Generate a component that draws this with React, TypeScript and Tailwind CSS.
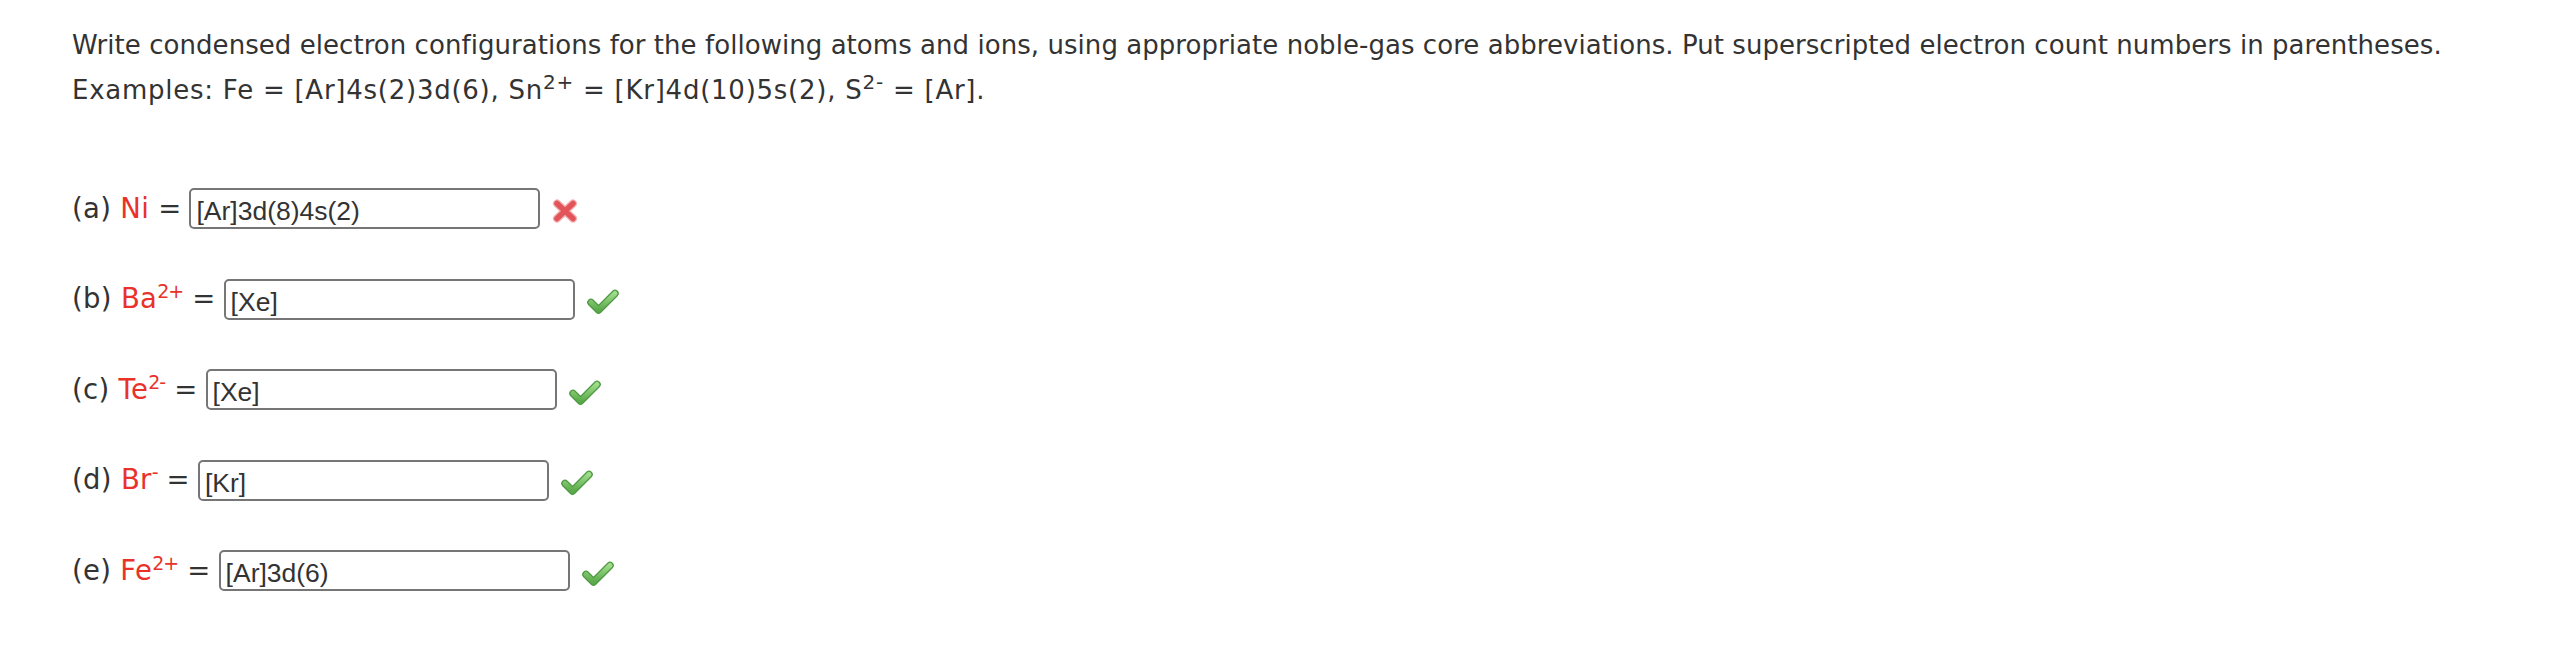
const rows = [
  { tag: "a", sym: "Ni", sup: "", value: "[Ar]3d(8)4s(2)", ok: false },
  { tag: "b", sym: "Ba", sup: "2+", value: "[Xe]", ok: true },
  { tag: "c", sym: "Te", sup: "2-", value: "[Xe]", ok: true },
  { tag: "d", sym: "Br", sup: "-", value: "[Kr]", ok: true },
  { tag: "e", sym: "Fe", sup: "2+", value: "[Ar]3d(6)", ok: true },
];

function Cross() {
  return (
    <svg width="28" height="26" viewBox="0 0 28 26" className="mt-[4px] ml-[11px] shrink-0">
      <g strokeLinecap="round">
        <path d="M6 5.5 L22 20.5 M22 5.5 L6 20.5" stroke="#f4b0b0" strokeWidth="8" />
        <path d="M6 5.5 L22 20.5 M22 5.5 L6 20.5" stroke="#e2545a" strokeWidth="5.5" />
      </g>
    </svg>
  );
}

function Check() {
  return (
    <svg width="32" height="27" viewBox="0 0 32 27" className="mt-[5px] ml-[12px] shrink-0">
      <defs>
        <linearGradient id="ck" x1="0" y1="0" x2="0" y2="1">
          <stop offset="0" stopColor="#9edb8a" />
          <stop offset="1" stopColor="#5aa94a" />
        </linearGradient>
      </defs>
      <path
        d="M4 14.5 L11.5 22 L28 5.5"
        fill="none"
        stroke="#4e9a42"
        strokeWidth="7.5"
        strokeLinecap="round"
        strokeLinejoin="round"
      />
      <path
        d="M4 14.5 L11.5 22 L28 5.5"
        fill="none"
        stroke="url(#ck)"
        strokeWidth="5"
        strokeLinecap="round"
        strokeLinejoin="round"
      />
    </svg>
  );
}

export default function App() {
  return (
    <main className="min-h-screen bg-white pl-[72px] pt-[30px] text-[#333333] font-['DejaVu_Sans',Verdana,sans-serif]">
      <div className="text-[26px] leading-[30px]">
        <p className="tracking-[0.05px]">
          Write condensed electron configurations for the following atoms and ions, using appropriate
          noble-gas core abbreviations. Put superscripted electron count numbers in parentheses.
        </p>
        <p className="mt-[15px] tracking-[0.75px]">
          Examples: Fe = [Ar]4s(2)3d(6), Sn
          <span className="relative -top-[10px] text-[20px] leading-none">2+</span> = [Kr]4d(10)5s(2), S
          <span className="relative -top-[10px] text-[20px] leading-none">2-</span> = [Ar].
        </p>
      </div>

      <div className="mt-[83px] flex flex-col gap-[49.5px]">
        {rows.map((r) => (
          <div key={r.tag} className="flex items-center h-[41px]">
            <div className="whitespace-pre text-[27.5px] leading-none tracking-[0.3px]">
              ({r.tag}){" "}
              <span className="text-[#e8322a]">
                {r.sym}
                {r.sup && (
                  <span className="relative -top-[10px] text-[19px] leading-none tracking-[-1px]">
                    {r.sup}
                  </span>
                )}
              </span>{" "}
              =
            </div>
            <div className="ml-[8px] w-[351px] h-[41px] shrink-0 rounded-[5px] border-2 border-[#767676] pl-[5px] pt-[6px] text-[26.5px] leading-[31px] font-['Liberation_Sans',Arial,sans-serif] text-[#333333]">
              {r.value}
            </div>
            {r.ok ? <Check /> : <Cross />}
          </div>
        ))}
      </div>
    </main>
  );
}
